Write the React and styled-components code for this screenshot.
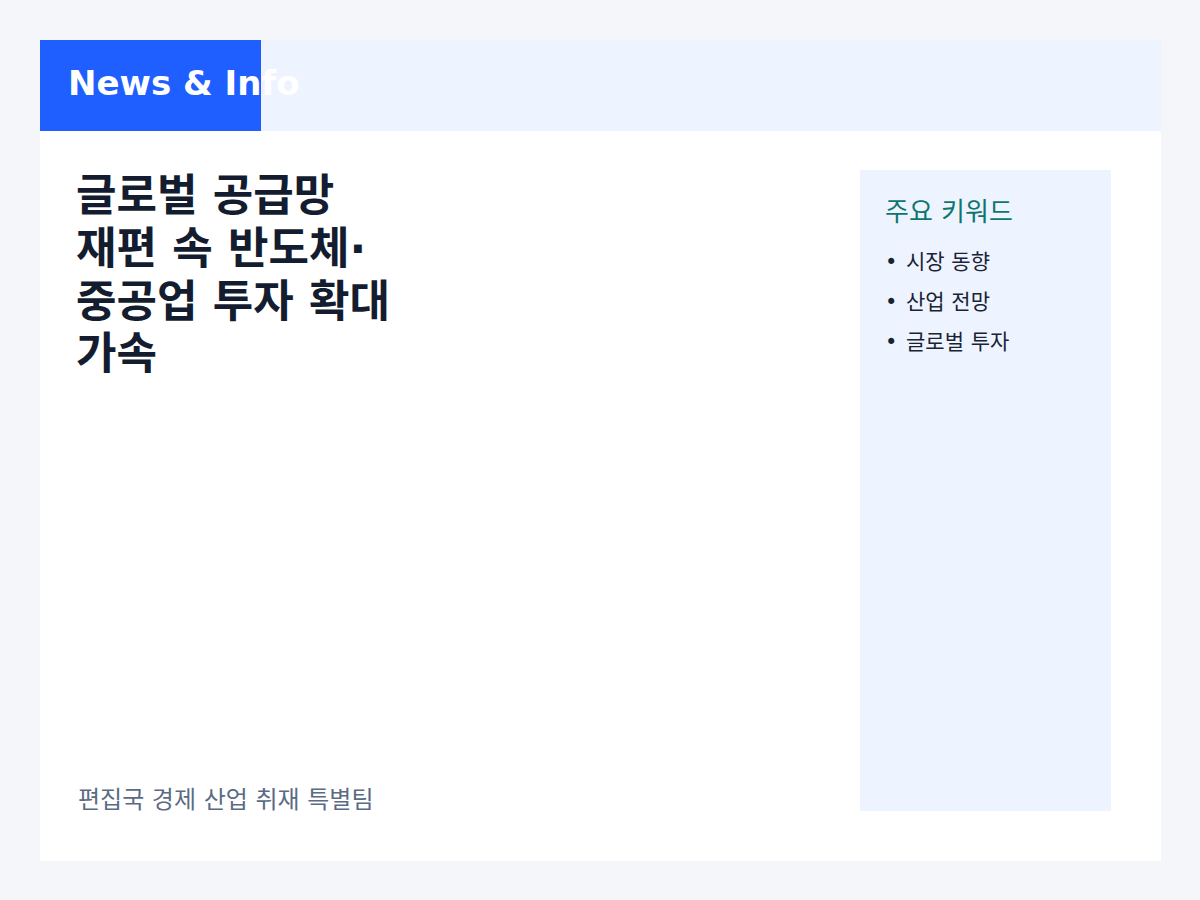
import React from 'react';
import styled, { createGlobalStyle } from 'styled-components';

const GlobalStyle = createGlobalStyle`
  html, body {
    margin: 0;
    padding: 0;
    background: #f5f6fa;
  }
  body {
    font-family: 'DejaVu Sans', 'Noto Sans CJK KR', sans-serif;
  }
`;

const keywords = ['시장 동향', '산업 전망', '글로벌 투자'];

const App = () => {
  return (
    <>
      <GlobalStyle />
      <Page>
        <Card>
          <Header>
            <Brand>News &amp; Info</Brand>
          </Header>
          <Content>
            <MainColumn>
              <Headline>글로벌 공급망 재편 속 반도체·중공업 투자 확대 가속</Headline>
              <Byline>편집국 경제 산업 취재 특별팀</Byline>
            </MainColumn>
            <Sidebar>
              <SidebarTitle>주요 키워드</SidebarTitle>
              <KeywordList>
                {keywords.map((k) => (
                  <Keyword key={k}>{k}</Keyword>
                ))}
              </KeywordList>
            </Sidebar>
          </Content>
        </Card>
      </Page>
    </>
  );
};

const Page = styled.div`
  width: 1200px;
  height: 900px;
  padding: 40px 39px 39px 40px;
  box-sizing: border-box;
`;

const Card = styled.div`
  height: 100%;
  background: #ffffff;
  display: flex;
  flex-direction: column;
`;

const Header = styled.header`
  height: 91px;
  background: #eef4ff;
  display: flex;
  flex-shrink: 0;
`;

const Brand = styled.div`
  width: 221px;
  background: #1f5fff;
  color: #ffffff;
  font-size: 34px;
  font-weight: bold;
  white-space: nowrap;
  padding: 0 0 5px 28px;
  box-sizing: border-box;
  display: flex;
  align-items: center;
  overflow: visible;
`;

const Content = styled.div`
  flex: 1;
  display: grid;
  grid-template-columns: 1fr 251px;
  gap: 30px;
  padding: 39px 50px 50px 36px;
`;

const MainColumn = styled.div`
  display: flex;
  flex-direction: column;
  justify-content: space-between;
  min-width: 0;
`;

const Headline = styled.h1`
  margin: 0;
  max-width: 330px;
  font-size: 44px;
  line-height: 1.2;
  font-weight: bold;
  color: #131d2f;
  word-break: keep-all;
`;

const Byline = styled.p`
  margin: 0 0 -7px 2px;
  font-size: 24px;
  line-height: 36px;
  color: #5b6b84;
`;

const Sidebar = styled.aside`
  background: #eef4ff;
  padding: 25px 25px;
`;

const SidebarTitle = styled.h2`
  margin: 0 0 13px;
  font-size: 26px;
  line-height: 34px;
  font-weight: normal;
  color: #0f766e;
`;

const KeywordList = styled.ul`
  list-style: none;
  margin: 0;
  padding: 0;
`;

const Keyword = styled.li`
  font-size: 21px;
  line-height: 40px;
  color: #1a2333;

  &::before {
    content: '•';
    display: inline-block;
    width: 21px;
  }
`;

export default App;
